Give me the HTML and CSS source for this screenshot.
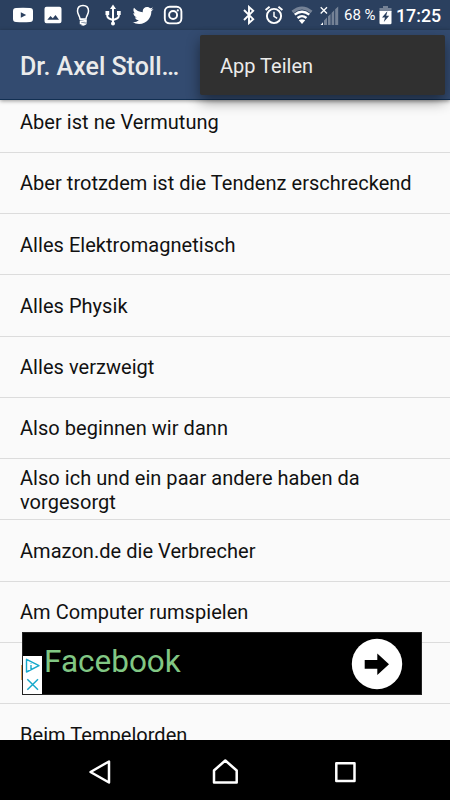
FILE: index.html
```html
<!DOCTYPE html>
<html lang="de">
<head>
  <meta charset="UTF-8">
  <meta name="viewport" content="width=device-width, initial-scale=1.0">
  <title>Dr. Axel Stoll Soundboard</title>
  <link rel="stylesheet" href="styles.css">
</head>
<body>
  <div class="screen">
    <header class="status-bar">
      <div class="notifications">
        <svg width="24" height="24" viewBox="0 0 24 24"><path fill="#fff" fill-rule="evenodd" d="M5 5Q12 4.600 19 5Q22 5 22 8V16Q22 19 19 19Q12 19.400 5 19Q2 19 2 16V8Q2 5 5 5ZM9.800 9.300V14.700L15.200 12Z"/></svg>
        <svg width="24" height="24" viewBox="0 0 24 24"><path fill="#fff" fill-rule="evenodd" d="M5.500 3.800H18.500Q20.500 3.800 20.500 5.800V18.200Q20.500 20.200 18.500 20.200H5.500Q3.500 20.200 3.500 18.200V5.800Q3.500 3.800 5.500 3.800ZM6.300 16.800H18L14.500 12L11.800 15.200L9.500 13Z"/></svg>
        <svg width="24" height="24" viewBox="0 0 24 24" fill="none" stroke="#fff" stroke-width="1.500"><path d="M9 16C9 13 6.500 11.500 6.500 8C6.500 4.300 9 2.500 12 2.500S17.500 4.300 17.500 8C17.500 11.500 15 13 15 16Z"/><path d="M9 16.500L15 17.500V19L9.500 18.500V20.500L14.500 21Q13 22.500 10.500 21.500"/></svg>
        <svg width="24" height="24" viewBox="0 0 24 24" fill="none" stroke="#fff" stroke-width="2"><path d="M12 4V21M6.300 10V13Q6.300 15.500 12 17Q17.800 15.500 17.800 13V10"/><path d="M12 1.500L15 6H9ZM4.500 8H8.200V12H4.500ZM16 8H19.700V12H16Z" fill="#fff" stroke="none"/><circle cx="12" cy="20.500" r="2" fill="#fff" stroke="none"/></svg>
        <svg width="24" height="24" viewBox="0 0 24 24"><path fill="#fff" d="M22.460 6c-.77.350-1.600.580-2.460.690.880-.530 1.560-1.370 1.880-2.380-.830.500-1.750.850-2.720 1.050C18.370 4.500 17.260 4 16 4c-2.350 0-4.270 1.920-4.270 4.290 0 .340.040.670.110.980C8.280 9.090 5.110 7.380 3 4.790c-.370.630-.580 1.370-.580 2.150 0 1.490.750 2.810 1.910 3.560-.710 0-1.370-.200-1.950-.500v.030c0 2.080 1.480 3.820 3.440 4.210a4.220 4.220 0 0 1-1.930.070 4.280 4.280 0 0 0 4 2.980 8.521 8.521 0 0 1-5.330 1.840c-.340 0-.680-.020-1.020-.060C3.440 20.290 5.700 21 8.120 21 16 21 20.330 14.460 20.330 8.790c0-.190 0-.370-.010-.560.840-.600 1.560-1.360 2.140-2.230z"/></svg>
        <svg width="24" height="24" viewBox="0 0 24 24" fill="none" stroke="#fff" stroke-width="1.900"><rect x="3.800" y="3.800" width="16.600" height="16.600" rx="4.800"/><circle cx="12.100" cy="12" r="4"/><circle cx="16.800" cy="7.400" r="1.100" fill="#fff" stroke="none"/></svg>
      </div>
      <div class="system">
        <svg class="bluetooth" width="12" height="20" viewBox="0 0 12 20" fill="none" stroke="#fff" stroke-width="1.900"><path d="M1 5L10.200 14.200L6 18V2L10.200 5.800L1 15"/></svg>
        <svg class="alarm" width="20" height="20" viewBox="0 0 20 20" fill="none" stroke="#fff" stroke-width="1.900"><circle cx="10" cy="11" r="7.100"/><path d="M1.600 5L5.600 1.700M18.400 5L14.400 1.700"/><path d="M10 6.800V11.300L13.200 13.300" stroke-width="1.500"/></svg>
        <svg class="wifi" width="22" height="20" viewBox="0 0 22 20" fill="none" stroke="#fff" stroke-width="2.300"><path d="M1.500 7Q11 -1 20.500 7" stroke-opacity=".35" stroke-width="3"/><path d="M3.700 9.700Q11 3.700 18.300 9.700M6.500 13Q11 9.300 15.500 13"/><path d="M11 19L7.800 15.300Q11 13 14.200 15.300Z" fill="#fff" stroke="none"/></svg>
        <svg class="signal" width="19" height="20" viewBox="0 0 19 20"><path fill="#fff" fill-opacity=".35" d="M4 15.500L7 12.500V20H4ZM8 11.500L10.600 9V20H8ZM11.600 8L14.200 5.300V20H11.600ZM15.200 4.300L18.200 1.500V20H15.200Z"/><path fill="#fff" d="M.500 20L3 17.200V20Z"/><path stroke="#fff" stroke-width="1.300" d="M.700 2.300L7 8.500M7 2.300L.700 8.500"/></svg>
        <span class="percent">68 %</span>
        <svg class="battery" width="13" height="19" viewBox="0 0 13 19"><path fill="#fff" fill-opacity=".35" d="M4 0H9V2H12.500V6H.500V2H4Z"/><path fill="#fff" fill-rule="evenodd" d="M.500 5H12.500V17Q12.500 18.300 11.200 18.300H1.800Q.500 18.300 .500 17ZM8.500 5L3 11.500H6L4.800 16L10.200 9.800H7.200Z"/></svg>
        <span class="clock">17:25</span>
      </div>
    </header>

    <div class="app-bar">
      <h1>Dr. Axel Stoll…</h1>
      <div class="menu">App Teilen</div>
    </div>

    <main class="content">
      <ul class="sound-list">
        <li>Aber ist ne Vermutung</li>
        <li>Aber trotzdem ist die Tendenz erschreckend</li>
        <li>Alles Elektromagnetisch</li>
        <li>Alles Physik</li>
        <li>Alles verzweigt</li>
        <li>Also beginnen wir dann</li>
        <li>Also ich und ein paar andere haben da vorgesorgt</li>
        <li>Amazon.de die Verbrecher</li>
        <li>Am Computer rumspielen</li>
        <li>B</li>
        <li>Beim Tempelorden</li>
      </ul>
      <div class="ad">
        <div class="ad-controls">
          <svg width="19" height="38" viewBox="0 0 19 38" fill="none" stroke="#16a9cb" stroke-width="1.400"><path d="M3.500 3.300L16 9.700L3.500 16ZM8 9V14M8 5.800V7.500" stroke-linejoin="round"/><path d="M4.300 23.300L15 33.700M15 23.300L4.300 33.700" stroke-width="1.500"/></svg>
        </div>
        <span class="ad-title">Facebook</span>
        <svg class="ad-arrow" width="52" height="52" viewBox="0 0 52 52"><circle cx="26" cy="26" r="25.200" fill="#fff"/><path d="M13.700 22H26.300V15.500L38 26.200L26.300 37V30.700H13.700Z"/></svg>
      </div>
    </main>

    <nav class="nav-bar">
      <svg width="30" height="30" viewBox="0 0 30 30"><path d="M19 4.500V25.500L0.500 15Z"/></svg>
      <svg width="30" height="30" viewBox="0 0 30 30"><path d="M15.300 3.500L26.700 13.500V25.500H4V13.500Z"/></svg>
      <svg width="30" height="30" viewBox="0 0 30 30"><path d="M6.300 6.200H24.500V24H6.300Z"/></svg>
    </nav>
  </div>
</body>
</html>
```
FILE: styles.css
```css
body {
  margin: 0;
  font-family: Roboto, sans-serif;
  background-color: #000;
}

.screen {
  display: flex;
  flex-direction: column;
  width: 450px;
  height: 800px;
  overflow: hidden;
}

.status-bar {
  display: flex;
  justify-content: space-between;
  align-items: center;
  height: 30px;
  padding: 0 9px 0 10.5px;
  box-sizing: border-box;
  background-color: #2b405f;
  color: #fff;
}

.notifications,
.system {
  display: flex;
  align-items: center;
}

.notifications {
  gap: 6px;
}

.bluetooth {
  margin-right: 9px;
}

.alarm {
  margin-right: 7px;
}

.wifi {
  margin-right: 7px;
}

.signal {
  margin-right: 5px;
}

.percent {
  width: 31px;
  margin-right: 4px;
  font-size: 15px;
  white-space: nowrap;
}

.battery {
  margin-right: 4px;
}

.clock {
  width: 45px;
  padding-right: 1px;
  box-sizing: border-box;
  font-size: 17.8px;
  font-weight: 500;
  text-align: right;
}

.app-bar {
  position: relative;
  z-index: 2;
  display: flex;
  align-items: center;
  height: 70px;
  padding-left: 20px;
  box-sizing: border-box;
  background-color: #334b70;
  border-bottom: 1px solid #122f52;
  box-shadow: 0 1px 4px rgba(0, 0, 0, 0.4);
}

h1 {
  margin: 4px 0 0;
  color: #ebebeb;
  font-size: 25px;
  font-weight: 500;
}

.menu {
  position: absolute;
  top: 5px;
  right: 5px;
  width: 245px;
  height: 60px;
  padding-left: 20px;
  box-sizing: border-box;
  border-radius: 2px;
  background-color: #303030;
  box-shadow: 0 6px 14px rgba(0, 0, 0, 0.45);
  color: #ebebeb;
  font-size: 20px;
  line-height: 62px;
}

.content {
  position: relative;
  height: 640px;
  overflow: hidden;
  background-color: #fafafa;
}

.sound-list {
  margin: -8.5px 0 0;
  padding: 0;
  list-style: none;
}

.sound-list li {
  display: flex;
  align-items: center;
  height: 61.25px;
  padding: 1px 20px 0;
  box-sizing: border-box;
  border-bottom: 1px solid #dcdcdc;
  color: #111;
  font-size: 20px;
  letter-spacing: 0.04px;
  line-height: 24px;
}

.ad {
  position: absolute;
  top: 532px;
  left: 22px;
  display: flex;
  align-items: center;
  width: 400px;
  height: 63px;
  padding-right: 18px;
  box-sizing: border-box;
  border: 1px solid #222;
  background-color: #000;
}

.ad-controls {
  align-self: flex-end;
  height: 38px;
  background-color: #fff;
}

.ad-title {
  flex: 1;
  margin: 0 0 4px 2px;
  color: #81c784;
  font-size: 31.5px;
}

.nav-bar {
  display: flex;
  justify-content: center;
  gap: 90px;
  height: 60px;
  padding-top: 17px;
  box-sizing: border-box;
  background-color: #000;
}

.nav-bar svg {
  overflow: visible;
}

.nav-bar path {
  fill: none;
  stroke: #fff;
  stroke-width: 2.5;
  stroke-linejoin: round;
}
```
